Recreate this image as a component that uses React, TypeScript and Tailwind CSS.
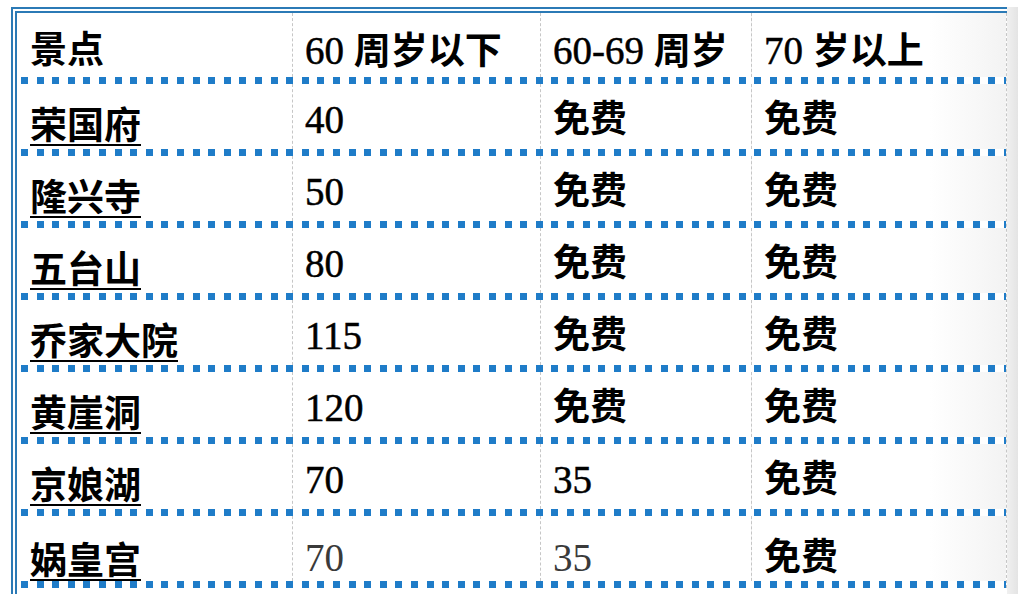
const rows = [
  ['荣国府', '40', '免费', '免费'],
  ['隆兴寺', '50', '免费', '免费'],
  ['五台山', '80', '免费', '免费'],
  ['乔家大院', '115', '免费', '免费'],
  ['黄崖洞', '120', '免费', '免费'],
  ['京娘湖', '70', '35', '免费'],
  ['娲皇宫', '70', '35', '免费'],
];

const header = ['景点', '60 周岁以下', '60-69 周岁', '70 岁以上'];

// wrap the chinese runs so they get the heavier weight, digits stay regular
function Mixed({ text, light }: { text: string; light?: boolean }) {
  const parts = text.split(/([\u4e00-\u9fff]+)/).filter(Boolean);
  return (
    <>
      {parts.map((p, i) =>
        /[\u4e00-\u9fff]/.test(p) ? (
          <span key={i} className="font-bold">{p}</span>
        ) : (
          <span key={i} className={`text-[39px] ${light ? 'text-[#3a3a3a]' : '[-webkit-text-stroke:0.5px_#000]'}`}>{p}</span>
        )
      )}
    </>
  );
}

function Dots() {
  return (
    <div className="h-[7px] pl-[4px]">
      <div className="h-full bg-[image:repeating-linear-gradient(90deg,#1f7cc8_0_7px,transparent_7px_15.6px)]"></div>
    </div>
  );
}

const cols = 'grid grid-cols-[275px_248px_211px_255px]';
const cell = 'border-l border-dashed border-[#c6c6c6]';
const lastCol = 'bg-[linear-gradient(90deg,#ffffff_70%,#f3f3f3)]';

export default function App() {
  return (
    <div className="h-[594px] overflow-hidden bg-white flex pt-[7px] pl-[11px] text-black font-['Liberation_Serif','Noto_Sans_CJK_SC',serif] text-[37px] leading-[37px]">
      <div className="w-[996px] shrink-0 border-l-[6px] border-t-[6px] border-double border-[#2b7ab6] border-r-0 border-b-0">
        <div className="border-r border-dashed border-[#c6c6c6]">
          {/* header */}
          <div className={`${cols} h-[64px]`}>
            {header.map((h, i) => (
              <div
                key={h}
                className={`${i > 0 ? cell : ''} ${i === 3 ? lastCol : ''} ${i === 0 ? 'pl-[13px]' : 'pl-[12px]'} pt-[19px]`}
              >
                <Mixed text={h} />
              </div>
            ))}
          </div>
          <Dots />

          {rows.map((r, ri) => {
            const last = ri === rows.length - 1;
            return (
              <div key={r[0]}>
                <div className={`${cols} h-[65px]`}>
                  <div className={`pl-[13px] ${last ? 'pt-[27px]' : 'pt-[24px]'}`}>
                    <span className="font-bold underline decoration-2 underline-offset-[5px]">{r[0]}</span>
                  </div>
                  {r.slice(1).map((v, ci) => (
                    <div
                      key={ci}
                      className={`${cell} ${ci === 2 ? lastCol : ''} pl-[12px] ${last ? 'pt-[23px]' : 'pt-[17px]'}`}
                    >
                      <Mixed text={v} light={last} />
                    </div>
                  ))}
                </div>
                <Dots />
              </div>
            );
          })}
        </div>
      </div>
      <div className="flex-1 bg-[linear-gradient(90deg,#f0f0f0,#e4e4e4)]"></div>
    </div>
  );
}
